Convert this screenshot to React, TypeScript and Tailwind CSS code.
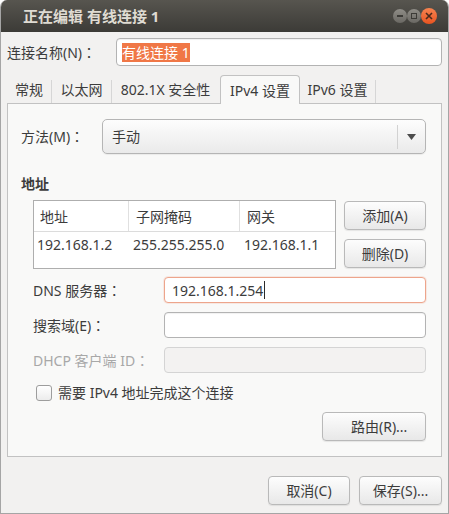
import type { ReactNode } from 'react'

function Colon() {
  return <span className="font-['Noto_Sans_CJK_TC',sans-serif]">：</span>
}

function Btn({ children, className = '' }: { children: ReactNode; className?: string }) {
  return (
    <div
      className={`flex items-center justify-center rounded-[4px] border border-[#b9b9b9] bg-linear-to-b from-[#fdfdfd] to-[#e8e8e8] shadow-[0_1px_1px_rgba(0,0,0,0.08)] text-[#3c3c3c] ${className}`}
    >
      {children}
    </div>
  )
}

function Field({ label, disabled, focused, value }: { label: string; disabled?: boolean; focused?: boolean; value?: string }) {
  return (
    <div className="flex h-[26px] items-center">
      <div className={`w-[131px] shrink-0 ${disabled ? 'text-[#a8a8a8]' : ''}`}>
        {label}
        <Colon />
      </div>
      <div
        className={`flex h-[26px] flex-1 items-center rounded-[4px] border px-[7px] ${
          focused
            ? 'border-[#eda58c] bg-white shadow-[0_0_0_1px_rgba(240,119,70,0.12)]'
            : disabled
              ? 'border-[#d4d4d4] bg-[#f3f2f1]'
              : 'border-[#b3b3b3] bg-white shadow-[inset_0_1px_1px_rgba(0,0,0,0.06)]'
        }`}
      >
        {value && <span>{value}</span>}
        {focused && <span className="ml-px h-[18px] w-px bg-[#2b2b2b]" />}
      </div>
    </div>
  )
}

function TitleButtons() {
  return (
    <div className="flex items-center">
      <div className="flex h-[14px] w-[14px] items-center justify-center rounded-full bg-linear-to-b from-[#8f8d87] to-[#6a6863]">
        <div className="h-[2px] w-[6px] bg-[#3c3b37]" />
      </div>
      <div className="flex h-[14px] w-[14px] items-center justify-center rounded-full bg-linear-to-b from-[#8f8d87] to-[#6a6863]">
        <div className="h-[6px] w-[6px] border-[1.5px] border-[#3c3b37]" />
      </div>
      <div className="flex h-[16px] w-[16px] items-center justify-center rounded-full bg-linear-to-b from-[#f6834f] to-[#e8531f]">
        <svg width="8" height="8" viewBox="0 0 8 8">
          <path d="M1 1 L7 7 M7 1 L1 7" stroke="#4a2a1c" strokeWidth="1.6" />
        </svg>
      </div>
    </div>
  )
}

const tabs = [
  { label: '常规', w: 'w-[45px]' },
  { label: '以太网', w: 'w-[60px]' },
  { label: '802.1X 安全性', w: 'w-[108px]' },
  { label: 'IPv4 设置', w: 'w-[80px]', active: true },
  { label: 'IPv6 设置', w: 'w-[76px]' },
]

export default function App() {
  return (
    <div className="h-[514px] w-[449px] bg-white font-['Noto_Sans','Noto_Sans_CJK_SC',sans-serif] text-[14px] text-[#3c3c3c]">
      <div className="flex h-full flex-col overflow-hidden rounded-t-[7px] border-x border-b border-[#a5a5a5] bg-[#f2f1f0]">
        {/* title bar */}
        <div className="flex h-[32px] shrink-0 items-center bg-linear-to-b from-[#57554f] to-[#3c3b37] pl-[22px] pr-[11px]">
          <div className="flex-1 text-[15px] font-bold text-[#dfdbd2]">正在编辑 有线连接 1</div>
          <TitleButtons />
        </div>

        <div className="flex flex-1 flex-col px-[6px]">
          {/* connection name */}
          <div className="mt-[6px] flex h-[28px] items-center">
            <div className="w-[109px] shrink-0">
              连接名称(N)
              <Colon />
            </div>
            <div className="flex h-[28px] flex-1 items-center rounded-[4px] border border-[#b3b3b3] bg-white px-[5px] shadow-[inset_0_1px_1px_rgba(0,0,0,0.06)]">
              <span className="bg-[#f07746] leading-[19px] text-white">有线连接 1</span>
            </div>
          </div>

          {/* tabs */}
          <div className="mt-[9px] flex h-[28px] items-end">
            {tabs.map((t) =>
              t.active ? (
                <div
                  key={t.label}
                  className={`${t.w} relative z-10 -mb-px flex h-[29px] items-center justify-center rounded-t-[4px] border-x border-t border-[#c2c2c2] bg-[#f9f9f8]`}
                >
                  {t.label}
                </div>
              ) : (
                <div key={t.label} className={`${t.w} flex h-[28px] items-center justify-center`}>
                  <span className="flex-1 text-center">{t.label}</span>
                  <span className={`h-[23px] w-px self-end ${t.label === '802.1X 安全性' ? 'bg-transparent' : 'bg-[#d6d6d6]'}`} />
                </div>
              ),
            )}
          </div>

          {/* panel */}
          <div className="flex h-[354px] flex-col border border-[#c2c2c2] bg-[#f9f9f8] pl-[13px] pr-[15px]">
            <div className="mt-[15px] flex h-[35px] items-center">
              <div className="w-[81px] shrink-0">
                方法(M)
                <Colon />
              </div>
              <div className="flex h-[35px] flex-1 items-center rounded-[5px] border border-[#b5b5b5] bg-linear-to-b from-[#fdfdfd] to-[#eaeaea] pl-[9px] shadow-[0_1px_1px_rgba(0,0,0,0.06)]">
                <span className="flex-1">手动</span>
                <span className="h-[24px] w-px bg-[#d2d2d2]" />
                <svg className="mx-[9px]" width="9" height="6" viewBox="0 0 9 6">
                  <path d="M0 0 H9 L4.5 6 Z" fill="#4c4c4c" />
                </svg>
              </div>
            </div>

            <div className="mt-[20px] h-[20px] font-bold leading-[20px]">地址</div>

            <div className="mt-[6px] flex pl-[12px]">
              <div className="h-[69px] w-[303px] border border-[#aeaeae] bg-white">
                <div className="flex h-[31px] border-b border-[#dcdcdc]">
                  <div className="flex w-[95px] items-center border-r border-[#e0e0e0] pl-[6px]">地址</div>
                  <div className="flex w-[111px] items-center border-r border-[#e0e0e0] pl-[7px]">子网掩码</div>
                  <div className="flex flex-1 items-center pl-[7px]">网关</div>
                </div>
                <div className="flex h-[24px] items-center">
                  <div className="w-[95px] pl-[3px]">192.168.1.2</div>
                  <div className="w-[111px] pl-[4px]">255.255.255.0</div>
                  <div className="flex-1 pl-[4px]">192.168.1.1</div>
                </div>
              </div>
              <div className="ml-[8px] flex flex-1 flex-col gap-[9px] pt-px">
                <Btn className="h-[29px]">添加(A)</Btn>
                <Btn className="h-[29px]">删除(D)</Btn>
              </div>
            </div>

            <div className="mt-[8px] flex flex-col gap-[9px] pl-[12px]">
              <Field label="DNS 服务器" focused value="192.168.1.254" />
              <Field label="搜索域(E)" />
              <Field label="DHCP 客户端 ID" disabled />
            </div>

            <div className="mt-[11px] flex h-[17px] items-center pl-[15px]">
              <div className="h-[16px] w-[16px] rounded-[3px] border border-[#9d9d9d] bg-linear-to-b from-white to-[#ececec]" />
              <span className="ml-[6px]">需要 IPv4 地址完成这个连接</span>
            </div>

            <div className="mt-[11px] flex justify-end">
              <Btn className="h-[29px] w-[104px] !justify-start pl-[28px]">路由(R)...</Btn>
            </div>
          </div>

          {/* bottom buttons */}
          <div className="mt-[19px] flex justify-end gap-[9px]">
            <Btn className="h-[29px] w-[82px]">取消(C)</Btn>
            <Btn className="h-[29px] w-[83px]">保存(S)...</Btn>
          </div>
        </div>
      </div>
    </div>
  )
}
